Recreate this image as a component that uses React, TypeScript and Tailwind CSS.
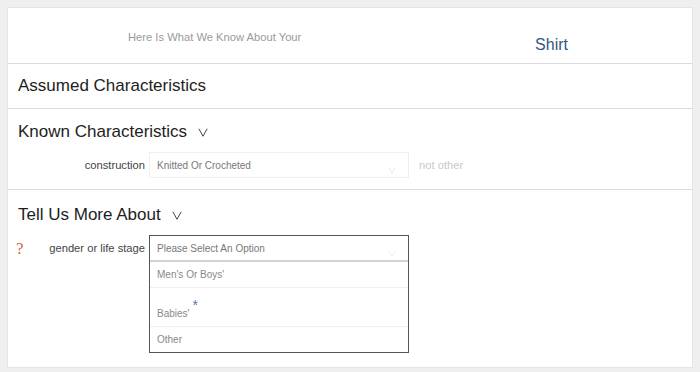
import React from 'react';

const font = { fontFamily: '"Liberation Sans", Arial, sans-serif' };

const Chevron: React.FC<{ className?: string }> = ({ className }) => (
  <svg viewBox="0 0 12 11" className={className} fill="none">
    <polyline points="1,1 6,10 11,1" stroke="currentColor" strokeWidth="1.1" />
  </svg>
);

const SectionTitle: React.FC<{ title: string; toggle?: boolean }> = ({ title, toggle }) => (
  <div className="flex items-center h-[22px] pl-[10px] text-[17px] text-[#1e1e1e]">
    <span>{title}</span>
    {toggle && <Chevron className="w-[10px] h-[11px] ml-[11px] text-[#333]" />}
  </div>
);

const options = ["Men's Or Boys'", "Babies'", 'Other'];

export default function App() {
  return (
    <div className="w-[700px] h-[372px] bg-[#efefef] pt-[7px] pl-[7px]" style={font}>
      <div className="w-[686px] h-[361px] bg-white border border-[#e4e4e4] flex flex-col">
        {/* header */}
        <div className="h-[56px] flex items-start border-b border-[#dcdcdc]">
          <span className="ml-[120px] mt-[21px] text-[11.2px] text-[#9a9a9a]">
            Here Is What We Know About Your
          </span>
          <span className="ml-auto mr-[124px] mt-[25px] text-[16px] text-[#36567e]">Shirt</span>
        </div>

        {/* assumed */}
        <div className="h-[45px] flex items-center border-b border-[#dcdcdc]">
          <SectionTitle title="Assumed Characteristics" />
        </div>

        {/* known */}
        <div className="h-[81px] border-b border-[#dcdcdc] pt-[12px]">
          <SectionTitle title="Known Characteristics" toggle />
          <div className="flex items-center mt-[9px]">
            <div className="w-[137px] text-right text-[11.2px] text-[#444]">construction</div>
            <div className="ml-[4px] w-[260px] h-[26px] border border-[#efefef] relative flex items-center pl-[7px] text-[10px] text-[#777]">
              Knitted Or Crocheted
              <Chevron className="absolute right-[11px] top-[14px] w-[10px] h-[7px] text-[#e2e2e2]" />
            </div>
            <span className="ml-[10px] text-[11.2px] text-[#c8c8c8]">not other</span>
          </div>
        </div>

        {/* tell us more */}
        <div className="flex-1 pt-[14px]">
          <SectionTitle title="Tell Us More About" toggle />
          <div className="flex items-start mt-[9px]">
            <div className="w-[137px] h-[26px] flex items-center justify-between pl-[8px]">
              <span
                className="text-[17px] text-[#d0694a] leading-none"
                style={{ fontFamily: '"Liberation Serif", "Times New Roman", serif' }}
              >
                ?
              </span>
              <span className="text-[11.2px] text-[#444]">gender or life stage</span>
            </div>
            <div className="ml-[4px] w-[260px] border border-[#555] bg-white flex flex-col text-[10px] text-[#888]">
              <div className="h-[26px] flex items-center pl-[7px] text-[#777] relative border-b-2 border-[#d2d2d2]">
                Please Select An Option
                <Chevron className="absolute right-[11px] top-[14px] w-[10px] h-[7px] text-[#e6e6e6]" />
              </div>
              <div className="h-[26px] flex items-center pl-[7px] border-b border-[#f0f0f0]">{options[0]}</div>
              <div className="h-[39px] flex items-end pl-[7px] pb-[5px] border-b border-[#f0f0f0]">
                <span>{options[1]}</span>
                <span className="text-[#5a7ea6] text-[14px] leading-none relative -top-[9px] ml-[3px]">*</span>
              </div>
              <div className="h-[25px] flex items-center pl-[7px]">{options[2]}</div>
            </div>
          </div>
        </div>
      </div>
    </div>
  );
}
